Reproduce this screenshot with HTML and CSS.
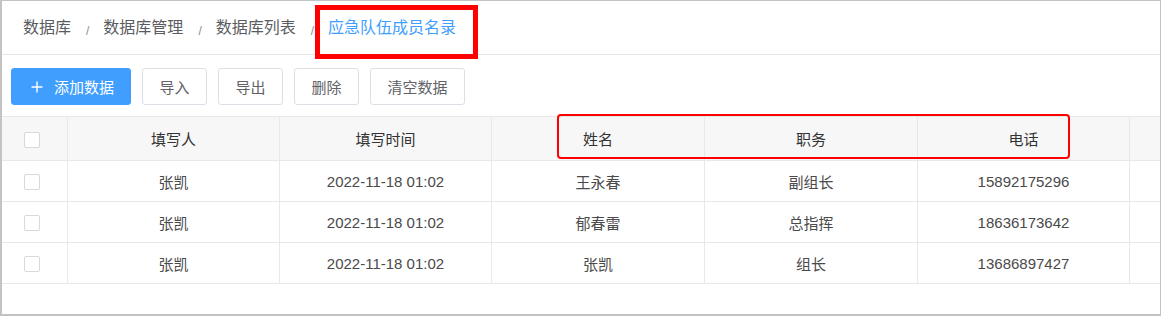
FILE: index.html
```html
<!DOCTYPE html>
<html lang="zh-CN">
<head>
<meta charset="utf-8">
<title>应急队伍成员名录</title>
<link rel="stylesheet" href="styles.css">
</head>
<body>
<div class="frame">
  <nav class="crumbs">
    <span class="crumb">数据库</span><span class="sep">/</span>
    <span class="crumb">数据库管理</span><span class="sep">/</span>
    <span class="crumb">数据库列表</span><span class="sep">/</span>
    <span class="crumb active">应急队伍成员名录</span>
  </nav>
  <div class="toolbar">
    <button class="btn primary"><svg class="plus" viewBox="0 0 12 12" width="12" height="12"><path d="M6 0.5V11.5M0.5 6H11.5" stroke="#fff" stroke-width="1.4" fill="none"/></svg><span>添加数据</span></button>
    <button class="btn">导入</button>
    <button class="btn">导出</button>
    <button class="btn">删除</button>
    <button class="btn">清空数据</button>
  </div>
  <div class="table">
    <div class="row head">
      <div class="cell check"><span class="box"></span></div>
      <div class="cell">填写人</div>
      <div class="cell">填写时间</div>
      <div class="cell">姓名</div>
      <div class="cell">职务</div>
      <div class="cell">电话</div>
      <div class="cell gutter"></div>
    </div>
    <div class="row">
      <div class="cell check"><span class="box"></span></div>
      <div class="cell">张凯</div>
      <div class="cell">2022-11-18 01:02</div>
      <div class="cell">王永春</div>
      <div class="cell">副组长</div>
      <div class="cell">15892175296</div>
      <div class="cell gutter"></div>
    </div>
    <div class="row">
      <div class="cell check"><span class="box"></span></div>
      <div class="cell">张凯</div>
      <div class="cell">2022-11-18 01:02</div>
      <div class="cell">郁春雷</div>
      <div class="cell">总指挥</div>
      <div class="cell">18636173642</div>
      <div class="cell gutter"></div>
    </div>
    <div class="row">
      <div class="cell check"><span class="box"></span></div>
      <div class="cell">张凯</div>
      <div class="cell">2022-11-18 01:02</div>
      <div class="cell">张凯</div>
      <div class="cell">组长</div>
      <div class="cell">13686897427</div>
      <div class="cell gutter"></div>
    </div>
  </div>
  <div class="mark mark-crumb"></div>
  <div class="mark mark-cols"></div>
</div>
</body>
</html>
```
FILE: styles.css
```css
* { box-sizing: border-box; }
html, body { margin: 0; padding: 0; background: #fff; }
body {
  font-family: "Liberation Sans", "Noto Sans CJK SC", sans-serif;
  color: #606266;
}
.frame {
  position: relative;
  width: 1161px;
  height: 316px;
  border-style: solid;
  border-color: #c3c3c3;
  border-width: 1px 1px 2px 2px;
  overflow: hidden;
}
.crumbs {
  height: 54px;
  display: flex;
  align-items: center;
  padding-left: 21px;
  border-bottom: 1px solid #e6e6e6;
  font-size: 16px;
  line-height: 1;
}
.crumb { color: #5a5c61; }
.crumb.active { color: #409eff; }
.sep {
  font-size: 12px;
  color: #8a8d93;
  margin: 0 14px 0 15px;
  position: relative;
  top: 3px;
}
.toolbar {
  display: flex;
  gap: 11px;
  padding: 13px 0 11px 9px;
}
.btn {
  height: 37px;
  padding: 0 16.5px;
  border: 1px solid #dcdfe6;
  border-radius: 3px;
  background: #fff;
  color: #606266;
  font-family: "Liberation Sans", "Noto Sans CJK SC", sans-serif;
  font-size: 15px;
  display: flex;
  align-items: center;
  cursor: pointer;
}
.btn.primary {
  background: #409eff;
  border-color: #409eff;
  color: #fff;
  padding: 0 16px 0 19px;
  gap: 11px;
}
.plus { display: block; }
.table {
  border-top: 1px solid #e8e8e8;
  font-size: 15px;
}
.row {
  display: grid;
  grid-template-columns: 66px 212px 212px 213px 213px 212px 1fr;
  height: 41px;
  border-bottom: 1px solid #e8e8e8;
  color: #4a4a4a;
}
.row.head {
  height: 44px;
  background: #f7f7f7;
  color: #333;
}
.cell {
  display: flex;
  align-items: center;
  justify-content: center;
  border-right: 1px solid #e8e8e8;
}
.cell.gutter { border-right: none; }
.cell.check {
  justify-content: flex-start;
  padding-left: 22px;
  padding-top: 2px;
}
.box {
  width: 16px;
  height: 16px;
  border: 1px solid #d6d9e0;
  border-radius: 2px;
  background: #fff;
}
.mark {
  position: absolute;
  border-style: solid;
  border-color: #ff0000;
}
.mark-crumb {
  left: 313px;
  top: 4px;
  width: 163px;
  height: 54px;
  border-width: 5px;
}
.mark-cols {
  left: 555px;
  top: 113px;
  width: 513px;
  height: 45px;
  border-width: 2px;
  border-radius: 4px;
}
```
